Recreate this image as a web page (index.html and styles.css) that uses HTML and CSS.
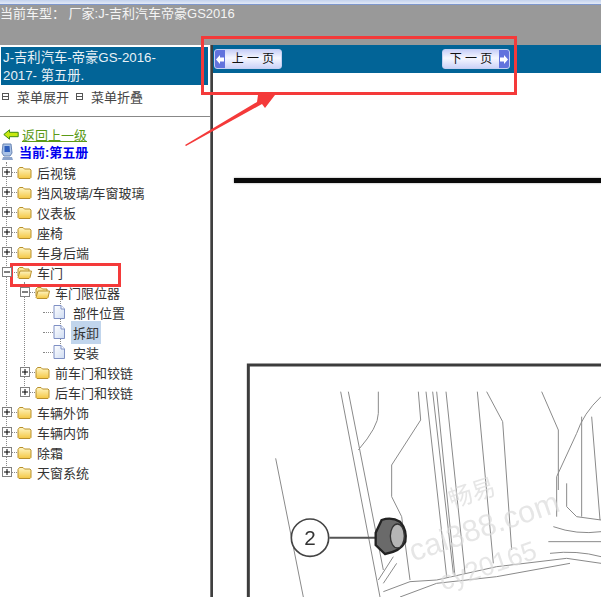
FILE: index.html
```html
<!DOCTYPE html>
<html lang="zh">
<head>
<meta charset="UTF-8" />
<title>当前车型</title>
<link rel="stylesheet" href="styles.css">
</head>
<body>
<svg class="defs" width="0" height="0">
  <defs>
    <linearGradient id="folderFill" x1="0" y1="0" x2="0" y2="1">
      <stop offset="0" stop-color="#fff6c4"/>
      <stop offset="1" stop-color="#f4c743"/>
    </linearGradient>
    <linearGradient id="docFill" x1="0" y1="0" x2="1" y2="1">
      <stop offset="0" stop-color="#fff"/>
      <stop offset="1" stop-color="#cfdcf2"/>
    </linearGradient>
    <symbol id="plus" viewBox="0 0 10 10">
      <rect x=".5" y=".5" width="9" height="9" fill="#fff" stroke="#808080"/>
      <path d="M2 5h6M5 2v6" stroke="#000" fill="none"/>
    </symbol>
    <symbol id="minus" viewBox="0 0 10 10">
      <rect x=".5" y=".5" width="9" height="9" fill="#fff" stroke="#808080"/>
      <path d="M2 5h6" stroke="#000" fill="none"/>
    </symbol>
    <symbol id="folder" viewBox="0 0 15 13">
      <path d="M1 11.5V3.5L2.5 1.5H6L7.5 3H13L14 4V11.5L13 12.5H2Z" fill="url(#folderFill)" stroke="#b8902c"/>
    </symbol>
    <symbol id="folderOpen" viewBox="0 0 15 13">
      <path d="M1 10V3L2.5 1.5H6L7.5 3H12V5" fill="#fbe89a" stroke="#b8902c"/>
      <path d="M1 11.5L3 5H14.5L13 11.5L12 12.5H2Z" fill="url(#folderFill)" stroke="#b8902c"/>
    </symbol>
    <symbol id="doc" viewBox="0 0 12 14">
      <path d="M1 .5H8L11.5 4V13.5H1Z" fill="url(#docFill)" stroke="#7f90c4"/>
      <path d="M8 .5V4H11.5" fill="#fff" stroke="#7f90c4"/>
    </symbol>
  </defs>
</svg>

<div class="topstrip"></div>
<header class="carbar">当前车型： 厂家:J-吉利汽车帝豪GS2016</header>

<div class="main">
  <aside class="side">
    <div class="side-title">J-吉利汽车-帝豪GS-2016-<br>2017- 第五册.</div>
    <div class="menu-actions">
      <span class="box-icon"></span><span class="action">菜单展开</span>
      <span class="box-icon"></span><span class="action">菜单折叠</span>
    </div>
    <div class="back-row">
      <svg class="back-arrow" width="16" height="11" viewBox="0 0 16 11">
        <path d="M.8 5.5L6.5.8V3.3H15.2V7.7H6.5V10.2Z" fill="#c6e810" stroke="#3f8a12"/>
      </svg>
      <a class="back-link" href="#">返回上一级</a>
    </div>
    <div class="current-row">
      <svg width="13" height="18" viewBox="0 0 13 18">
        <path d="M2 1H10L11 10L9 13H3L1 10Z" fill="#a9c2e6" stroke="#6b86b4"/>
        <path d="M3.5 3H8.5L9 9H3.5Z" fill="#2f5fbd"/>
        <path d="M2 14H11L12 17H1Z" fill="#8ba3cb"/>
      </svg>
      <span class="current-text">当前:第五册</span>
    </div>

    <ul class="tree">
      <li class="row"><svg class="exp"><use href="#plus"/></svg><i class="dash"></i><svg class="fold"><use href="#folder"/></svg><span>后视镜</span></li>
      <li class="row"><svg class="exp"><use href="#plus"/></svg><i class="dash"></i><svg class="fold"><use href="#folder"/></svg><span>挡风玻璃/车窗玻璃</span></li>
      <li class="row"><svg class="exp"><use href="#plus"/></svg><i class="dash"></i><svg class="fold"><use href="#folder"/></svg><span>仪表板</span></li>
      <li class="row"><svg class="exp"><use href="#plus"/></svg><i class="dash"></i><svg class="fold"><use href="#folder"/></svg><span>座椅</span></li>
      <li class="row"><svg class="exp"><use href="#plus"/></svg><i class="dash"></i><svg class="fold"><use href="#folder"/></svg><span>车身后端</span></li>
      <li class="row"><svg class="exp"><use href="#minus"/></svg><i class="dash"></i><svg class="fold"><use href="#folderOpen"/></svg><span>车门</span></li>
      <li>
        <ul class="sub">
          <li class="row"><svg class="exp"><use href="#minus"/></svg><i class="dash"></i><svg class="fold"><use href="#folderOpen"/></svg><span>车门限位器</span></li>
          <li>
            <ul class="leaves">
              <li class="row"><i class="dash long"></i><svg class="docicon"><use href="#doc"/></svg><span class="leaf">部件位置</span></li>
              <li class="row"><i class="dash long"></i><svg class="docicon"><use href="#doc"/></svg><span class="leaf selected">拆卸</span></li>
              <li class="row"><i class="dash long"></i><svg class="docicon"><use href="#doc"/></svg><span class="leaf">安装</span></li>
            </ul>
          </li>
          <li class="row"><svg class="exp"><use href="#plus"/></svg><i class="dash"></i><svg class="fold"><use href="#folder"/></svg><span>前车门和铰链</span></li>
          <li class="row"><svg class="exp"><use href="#plus"/></svg><i class="dash"></i><svg class="fold"><use href="#folder"/></svg><span>后车门和铰链</span></li>
        </ul>
      </li>
      <li class="row"><svg class="exp"><use href="#plus"/></svg><i class="dash"></i><svg class="fold"><use href="#folder"/></svg><span>车辆外饰</span></li>
      <li class="row"><svg class="exp"><use href="#plus"/></svg><i class="dash"></i><svg class="fold"><use href="#folder"/></svg><span>车辆内饰</span></li>
      <li class="row"><svg class="exp"><use href="#plus"/></svg><i class="dash"></i><svg class="fold"><use href="#folder"/></svg><span>除霜</span></li>
      <li class="row"><svg class="exp"><use href="#plus"/></svg><i class="dash"></i><svg class="fold"><use href="#folder"/></svg><span>天窗系统</span></li>
    </ul>
  </aside>

  <div class="divider"></div>

  <section class="content">
    <div class="pager">
      <a class="page-btn prev" href="#">
        <span class="cap"><svg width="8" height="9" viewBox="0 0 8 9"><path d="M0 4.5L4 0V2.5H8V6.5H4V9Z" fill="#fff"/></svg></span>
        <span class="page-label">上 一 页</span>
      </a>
      <a class="page-btn next" href="#">
        <span class="page-label">下 一 页</span>
        <span class="cap"><svg width="8" height="9" viewBox="0 0 8 9"><path d="M8 4.5L4 0V2.5H0V6.5H4V9Z" fill="#fff"/></svg></span>
      </a>
    </div>
    <div class="rule"></div>
    <svg class="drawing" width="388" height="247" viewBox="9 0 1164 741">
      <path d="M115 741V45H1173" fill="none" stroke="#3c3c3c" stroke-width="9"/>
      <g fill="none" stroke="#8a8a8a" stroke-width="3">
        <path d="M392 125L510 741M415 125L520 660"/>
        <path d="M505 125V190Q505 230 445 300"/>
        <path d="M625 125L632 210L545 345V440L575 500L600 690"/>
        <path d="M648 125L710 680M668 125L730 670M680 125L735 680M708 125L765 670"/>
        <path d="M802 125L850 640M830 125L878 215L905 600"/>
        <path d="M995 125L1045 240V420"/>
        <path d="M1173 140Q1120 190 1100 250L1040 380V500"/>
        <path d="M1070 400V470L1100 500L1173 510"/>
        <path d="M1115 200V500M1145 200L1170 510"/>
        <path d="M197 325L280 741"/>
        <path d="M520 725L600 695L680 690L860 650L1070 625L1173 640"/>
        <path d="M570 741L680 700L860 680L1080 640"/>
        <path d="M1030 530Q1100 555 1173 545M1015 575H1173M1020 610Q1100 600 1173 620"/>
        <path d="M505 690L550 620M520 700L560 640"/>
      </g>
      <circle cx="300" cy="563" r="56" fill="#fff" stroke="#444" stroke-width="5"/>
      <text class="callout" x="300" y="585">2</text>
      <path d="M358 563H495" stroke="#555" stroke-width="6"/>
      <path d="M497 548L515 510Q545 500 570 515Q592 540 586 575Q570 605 525 612L497 585Z" fill="#6a6a6a" stroke="#222" stroke-width="7"/>
      <ellipse cx="562" cy="558" rx="21" ry="36" fill="#b5b5b5" stroke="#333" stroke-width="4"/>
      <g class="watermark">
        <text x="725" y="475" font-size="72" transform="rotate(-18 725 475)">畅易</text>
        <text x="610" y="635" font-size="92" transform="rotate(-19 610 635)">cai388.com</text>
        <text x="700" y="722" font-size="80" transform="rotate(-19 700 722)">cy20165</text>
      </g>
    </svg>
  </section>
</div>

<!-- annotations drawn over the screenshot -->
<div class="mark mark-pager"></div>
<div class="mark mark-door"></div>
<svg class="mark-arrow" width="100" height="60" viewBox="0 0 100 60">
  <path d="M0 53L72 10L73 3H90L80 16L77 12L1 54Z" fill="#f43a3a"/>
</svg>
</body>
</html>
```

FILE: styles.css
```css
* {
  box-sizing: border-box;
}
html, body {
  margin: 0;
  height: 100%;
  overflow: hidden;
}
body {
  position: relative;
  background: #fff;
  color: #333;
  font-family: "Liberation Sans", "Noto Sans CJK SC", sans-serif;
  font-size: 13px;
}
.defs {
  position: absolute;
}
.topstrip {
  height: 5px;
  background: linear-gradient(#c3d2ee, #dfe7f6 70%, #4d6fb8);
}
.carbar {
  height: 40px;
  padding-top: 1px;
  background: #999;
  color: #f4f4f4;
  line-height: 15px;
}

.main {
  display: flex;
  height: 552px;
}
.side {
  width: 210px;
  flex: none;
}
.divider {
  width: 3px;
  flex: none;
  background: #3f3f3f;
  border-left: 1px solid #777;
}
.content {
  flex: 1;
  min-width: 0;
}

.side-title {
  margin: 2px 2px 0 1px;
  height: 38px;
  padding: 2px;
  background: #026497;
  color: #e8f1f6;
  font-size: 13.3px;
  line-height: 18px;
}
.menu-actions {
  display: flex;
  align-items: center;
  height: 23px;
  margin-bottom: 8px;
  padding-left: 2px;
  color: #444;
}
.box-icon {
  width: 7px;
  height: 7px;
  border: 1px solid #555;
  background: linear-gradient(#555, #555) center / 5px 1px no-repeat;
}
.action {
  margin-left: 8px;
  margin-right: 7px;
}
.back-row {
  display: flex;
  align-items: center;
  height: 19px;
  padding: 8px 0 0 3px;
  gap: 3px;
  border-top: 1px solid #888;
  box-sizing: content-box;
}
.back-link {
  color: #5b9a18;
}
.current-row {
  display: flex;
  align-items: center;
  height: 15px;
  margin-bottom: 3px;
  padding-left: 1px;
  gap: 5px;
}
.current-text {
  color: #0000f0;
  font-weight: bold;
}

.tree, .sub, .leaves {
  list-style: none;
  margin: 0;
  padding: 0;
  position: relative;
}
.sub {
  padding-left: 18px;
}
.leaves {
  padding-left: 18px;
}
.tree::before, .sub::before, .leaves::before {
  content: "";
  position: absolute;
  left: 6px;
  top: 0;
  bottom: 10px;
  border-left: 1px dotted #888;
}
.sub::before {
  left: 24px;
}
.leaves::before {
  left: 42px;
  top: -10px;
}
.row {
  display: flex;
  align-items: center;
  height: 20px;
  padding-left: 2px;
  position: relative;
  white-space: nowrap;
}
.exp {
  width: 10px;
  height: 10px;
  flex: none;
  position: relative;
  z-index: 1;
}
.dash {
  width: 5px;
  flex: none;
  border-top: 1px dotted #888;
}
.dash.long {
  width: 10px;
  margin-left: 5px;
}
.fold {
  width: 15px;
  height: 13px;
  flex: none;
  margin-right: 5px;
}
.docicon {
  width: 12px;
  height: 14px;
  flex: none;
  margin-right: 8px;
}
.leaf {
  padding: 2px;
  margin-left: -2px;
}
.selected {
  background: #c1d5ec;
}

.pager {
  display: flex;
  justify-content: space-between;
  align-items: center;
  height: 28px;
  width: 388px;
  padding: 0 91px 0 1px;
  background: #026497;
}
.page-btn {
  display: flex;
  align-items: stretch;
  width: 68px;
  height: 20px;
  border: 1px solid #c5d0f2;
  border-radius: 3px;
  overflow: hidden;
  background: linear-gradient(#c9d0f8, #f6f7ff 45%, #ccd3f8);
  color: #111;
  text-decoration: none;
}
.cap {
  width: 10px;
  flex: none;
  display: flex;
  align-items: center;
  justify-content: center;
  background: #6273dd;
}
.page-label {
  flex: 1;
  text-align: center;
  font-size: 12px;
  line-height: 18px;
  white-space: nowrap;
}
.rule {
  height: 5px;
  margin: 105px 0 0 21px;
  background: #0a0a0a;
  box-shadow: 0 0 2px #888;
}
.drawing {
  display: block;
  margin-top: 167px;
  filter: blur(.4px);
}
.callout {
  font-size: 62px;
  fill: #333;
  text-anchor: middle;
}
.watermark text {
  fill: #dcdcdc;
  fill-opacity: .7;
}

/* red marks lying over the page */
.mark {
  position: absolute;
  border: 3px solid #f43a3a;
}
.mark-pager {
  left: 201px;
  top: 36px;
  width: 316px;
  height: 59px;
}
.mark-door {
  left: 10px;
  top: 263px;
  width: 111px;
  height: 24px;
}
.mark-arrow {
  position: absolute;
  left: 185px;
  top: 92px;
}
```
